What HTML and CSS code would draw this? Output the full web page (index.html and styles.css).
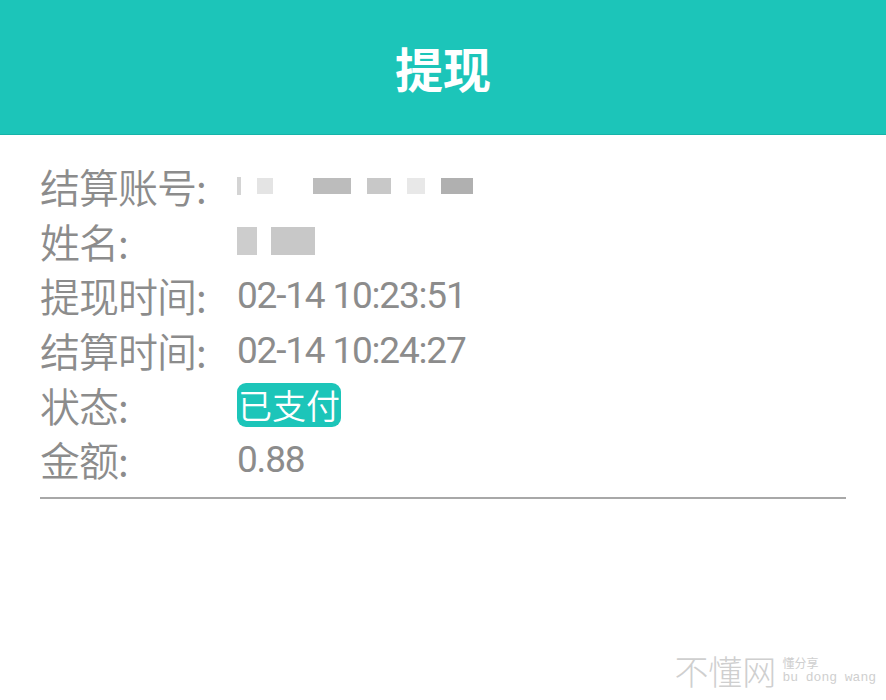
FILE: index.html
```html
<!DOCTYPE html>
<html lang="zh-CN">
<head>
    <meta charset="UTF-8">
    <meta name="viewport" content="width=device-width, initial-scale=1.0">
    <title>提现</title>
    <link rel="stylesheet" href="styles.css">
</head>
<body>
    <header class="topbar">
        <h1>提现</h1>
    </header>
    <div class="detail">
        <div class="row">
            <span class="label">结算账号:</span>
            <span class="value mosaic">
                <i class="px p1"></i><i class="px p2"></i><i class="px p3"></i><i class="px p4"></i><i class="px p5"></i><i class="px p6"></i>
            </span>
        </div>
        <div class="row">
            <span class="label">姓名:</span>
            <span class="value mosaic">
                <i class="px n1"></i><i class="px n2"></i>
            </span>
        </div>
        <div class="row">
            <span class="label">提现时间:</span>
            <span class="value">02-14 10:23:51</span>
        </div>
        <div class="row">
            <span class="label">结算时间:</span>
            <span class="value">02-14 10:24:27</span>
        </div>
        <div class="row">
            <span class="label">状态:</span>
            <span class="value"><span class="badge">已支付</span></span>
        </div>
        <div class="row">
            <span class="label">金额:</span>
            <span class="value">0.88</span>
        </div>
        <hr class="divider">
    </div>
    <div class="watermark">
        <span class="wm-big">不懂网</span>
        <span class="wm-small">
            <span class="wm-cn">懂分享</span>
            <span class="wm-en">bu dong wang</span>
        </span>
    </div>
</body>
</html>
```

FILE: styles.css
```css
body {
    margin: 0;
    padding: 0;
    background-color: #fff;
    font-family: "Noto Sans CJK SC", "Noto Sans", sans-serif;
    width: 886px;
    height: 700px;
    overflow: hidden;
    position: relative;
}
.topbar {
    background-color: #1cc5b9;
    height: 134px;
    border-bottom: 1px solid #16b3a8;
    display: flex;
    align-items: center;
    justify-content: center;
}
.topbar h1 {
    margin: 0;
    color: #fff;
    font-size: 48px;
    font-weight: bold;
    line-height: 1;
}
.detail {
    padding: 24px 40px 0 40px;
}
.row {
    display: grid;
    grid-template-columns: 197px 1fr;
    align-items: center;
    height: 54.6px;
    color: #8c8c8c;
}
.label {
    font-size: 40px;
    font-weight: 350;
    line-height: 1;
    letter-spacing: -1px;
}
.value {
    font-family: Roboto, "Noto Sans CJK SC", sans-serif;
    font-size: 37px;
    font-weight: 400;
    letter-spacing: -1.2px;
    line-height: 1;
}
.badge {
    display: inline-block;
    background-color: #1cc5b9;
    color: #fff;
    font-family: "Noto Sans CJK SC", sans-serif;
    font-size: 34px;
    font-weight: 350;
    letter-spacing: 0;
    line-height: 44px;
    padding: 0 1px;
    border-radius: 9px;
}
.mosaic {
    display: flex;
    align-items: center;
    height: 30px;
}
.px {
    display: block;
    height: 16px;
    background-color: #d8d8d8;
    margin-right: 16px;
}
.p1 { width: 4px; height: 18px; background-color: #d4d4d4; }
.p2 { width: 16px; background-color: #e4e4e4; }
.p3 { width: 38px; background-color: #bcbcbc; margin-left: 24px; }
.p4 { width: 24px; background-color: #c8c8c8; }
.p5 { width: 18px; background-color: #e8e8e8; }
.p6 { width: 32px; background-color: #b0b0b0; }
.n1 { width: 20px; height: 28px; background-color: #cdcdcd; margin-right: 14px; }
.n2 { width: 44px; height: 28px; background-color: #c8c8c8; }
.divider {
    border: none;
    border-top: 2px solid #a8a8a8;
    margin: 10px 0 0 0;
}
.watermark {
    position: absolute;
    right: 10px;
    bottom: 12px;
    display: flex;
    align-items: center;
    gap: 6px;
    color: #cfcfcf;
}
.wm-big {
    font-size: 34px;
    font-weight: 300;
    line-height: 1;
}
.wm-small {
    display: flex;
    flex-direction: column;
    font-size: 12px;
    line-height: 1.2;
}
.wm-en {
    font-family: "Liberation Mono", monospace;
    font-size: 13px;
}
```
